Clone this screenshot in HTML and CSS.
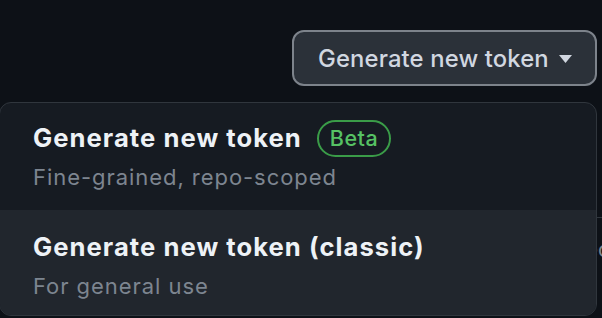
FILE: index.html
```html
<!DOCTYPE html>
<html lang="en">
<head>
<meta charset="utf-8">
<title>Generate new token</title>
<link rel="stylesheet" href="styles.css">
</head>
<body>
<div class="page">
  <div class="toolbar">
    <button class="btn" type="button">
      <span>Generate new token</span>
      <svg class="caret" width="13" height="8" viewBox="0 0 13 8" aria-hidden="true"><path d="M0 0h13L6.5 8z" fill="currentColor"/></svg>
    </button>
  </div>
  <div class="behind">
    <div class="behind-row"><span class="behind-text">Used</span></div>
  </div>
  <div class="menu">
    <div class="item">
      <div class="title">Generate new token <span class="badge">Beta</span></div>
      <div class="desc">Fine-grained, repo-scoped</div>
    </div>
    <div class="item item-hover">
      <div class="title">Generate new token (classic)</div>
      <div class="desc">For general use</div>
    </div>
  </div>
</div>
</body>
</html>
```

FILE: styles.css
```css
html, body {
  margin: 0;
  padding: 0;
  background: #0d1117;
  height: 100%;
  overflow: hidden;
}
body {
  font-family: Inter, "Noto Sans", "Liberation Sans", sans-serif;
  color: #e6edf3;
}
.page {
  position: relative;
  width: 602px;
  height: 318px;
}
.toolbar {
  display: flex;
  justify-content: flex-end;
  padding-top: 30px;
  padding-right: 5px;
}
.btn {
  display: flex;
  align-items: center;
  gap: 10px;
  box-sizing: border-box;
  width: 305px;
  height: 56px;
  padding: 0 24px 0 24px;
  border: 2px solid #7d838b;
  border-radius: 12px;
  background: #2b3139;
  color: #d1d7e0;
  font-family: inherit;
  font-size: 23.8px;
  font-weight: 500;
  letter-spacing: 0.15px;
  white-space: nowrap;
}
.caret {
  flex: none;
  color: #d1d7e0;
  margin-top: 1px;
}
.behind {
  padding-top: 131px;
}
.behind-row {
  border-top: 1px solid #30363d;
  height: 60px;
  position: relative;
}
.behind-text {
  position: absolute;
  left: 559px;
  top: 21px;
  font-size: 21px;
  line-height: 1;
  color: #7d8590;
}
.menu {
  position: absolute;
  left: -1px;
  top: 102px;
  width: 598px;
  box-sizing: border-box;
  border: 1.5px solid #30363d;
  border-radius: 12px;
  background: #161b22;
  overflow: hidden;
}
.item {
  height: 107px;
  box-sizing: border-box;
  padding: 16px 0 0 33px;
}
.item-hover {
  background: #21262d;
  height: 105px;
  padding-top: 18px;
}
.title {
  display: flex;
  align-items: center;
  gap: 15px;
  font-size: 25.6px;
  font-weight: 700;
  line-height: 38px;
  color: #eef2f6;
  letter-spacing: 1.05px;
  white-space: nowrap;
}
.badge {
  display: inline-flex;
  align-items: center;
  height: 37px;
  box-sizing: border-box;
  padding: 0 11px;
  border: 2px solid #3a9c48;
  border-radius: 20px;
  color: #56c264;
  font-size: 21.5px;
  font-weight: 500;
  letter-spacing: 0.5px;
}
.desc {
  margin-top: 5px;
  font-size: 22px;
  line-height: 30px;
  color: #7d8590;
  letter-spacing: 0.95px;
  white-space: nowrap;
}
```
